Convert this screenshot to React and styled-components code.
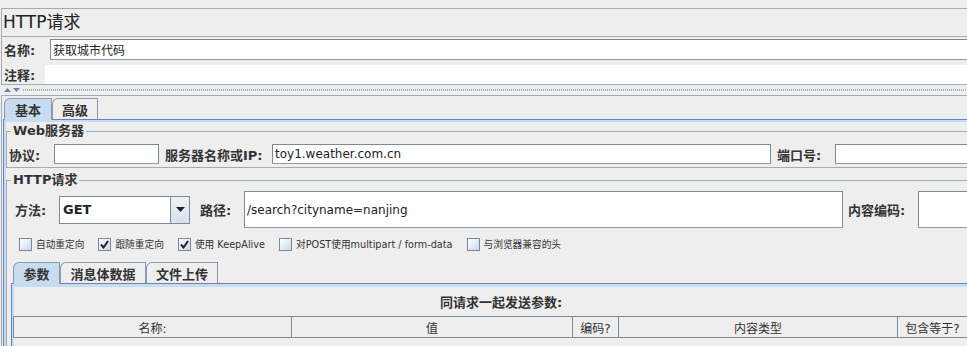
import React from "react";
import styled, { createGlobalStyle } from "styled-components";

const GlobalStyle = createGlobalStyle`
  html, body { margin: 0; padding: 0; overflow: hidden; background: #eeeeee; }
  body { font-family: "DejaVu Sans", "Noto Sans CJK SC", sans-serif; color: #333333; }
  * { box-sizing: border-box; }
`;

const Page = styled.div`
  width: 990px;
  height: 346px;
  padding-top: 8px;
  overflow: hidden;
`;

const Header = styled.div`
  margin-left: 1px;
  border: 1px solid #a3abb4;
  border-right: none;
`;

const Title = styled.div`
  height: 28px;
  line-height: 27px;
  padding-left: 1px;
  font-size: 17px;
  color: #222222;
  border-bottom: 1px solid #a3abb4;
`;

const NameArea = styled.div`
  display: flex;
  flex-direction: column;
  gap: 5px;
  padding-top: 2px;
`;

const Row = styled.div`
  display: flex;
  align-items: center;
  padding: ${(p) => p.$pad || "0"};
`;

const Label = styled.span`
  flex: none;
  width: ${(p) => p.$w}px;
  margin-left: ${(p) => p.$ml || 0}px;
  font-size: ${(p) => p.$size || 13}px;
  font-weight: bold;
  color: #333333;
  white-space: nowrap;
`;

const Field = styled.div`
  flex: ${(p) => (p.$w ? "none" : "1")};
  width: ${(p) => (p.$w ? `${p.$w}px` : "auto")};
  height: ${(p) => p.$h || 20}px;
  display: flex;
  align-items: center;
  padding-left: 2px;
  background: #ffffff;
  border: 1px solid #7a8a99;
  border-bottom-color: #8e9cab;
  font-size: 12px;
  color: #222222;
  white-space: nowrap;
`;

const NoteArea = styled.div`
  flex: 1;
  height: 19px;
  background: #ffffff;
`;

const Splitter = styled.div`
  height: 10px;
  display: flex;
  align-items: center;
  padding-left: 4px;
  gap: 2px;
`;

const Dots = styled.div`
  flex: 1;
  height: 2px;
  margin-left: 1px;
  border-top: 1px dotted #98a4b0;
  border-bottom: 1px dotted #b4bec8;
`;

const Lower = styled.div`
  margin-left: 1px;
  border-top: 1px solid #a3abb4;
  border-left: 1px solid #a3abb4;
  height: 251px;
`;

const TabStrip = styled.div`
  display: flex;
  align-items: flex-end;
  padding: ${(p) => (p.$top ? "2px 0 0 2px" : "0 0 0 2px")};
`;

const Tab = styled.div`
  position: relative;
  z-index: 1;
  width: ${(p) => p.$w}px;
  height: ${(p) => (p.$active ? 22 : 21)}px;
  margin-bottom: ${(p) => (p.$active ? -1 : 0)}px;
  display: flex;
  align-items: center;
  justify-content: center;
  font-size: 13px;
  font-weight: bold;
  color: #333333;
  background: ${(p) => (p.$active ? "#c8dcf0" : "#eeeeee")};
  border: 1px solid #8a9bb0;
  border-bottom: none;
  border-top-left-radius: 6px;
`;

const TabPanel = styled.div`
  margin-left: ${(p) => p.$ml || 0}px;
  border-top: 1px solid #6382bf;
  border-left: 1px solid #6382bf;
  box-shadow: inset 2px ${(p) => p.$band || 2}px 0 #c8dcf0;
  padding-top: ${(p) => p.$band || 2}px;
  min-height: ${(p) => p.$min || 0}px;
`;

const Group = styled.fieldset`
  margin: ${(p) => p.$mt}px 0 0 2px;
  padding: 0;
  min-width: 0;
  border: 1px solid #a3abb4;
  border-right: none;
  border-bottom: ${(p) => (p.$open ? "none" : "1px solid #a3abb4")};
`;

const Legend = styled.legend`
  margin-left: 4px;
  padding: 0 2px;
  font-size: 13px;
  line-height: 14px;
  font-weight: bold;
  color: #333333;
`;

const Combo = styled.div`
  flex: none;
  width: 131px;
  height: 28px;
  display: flex;
  border: 1px solid #7a8a99;
  background: #ffffff;
`;

const ComboText = styled.div`
  flex: 1;
  display: flex;
  align-items: center;
  padding-left: 2px;
  font-size: 13px;
  font-weight: bold;
  color: #222222;
  border: 1px solid #ffffff;
`;

const ComboButton = styled.div`
  flex: none;
  width: 19px;
  display: flex;
  align-items: center;
  justify-content: center;
  border-left: 1px solid #7a8a99;
  background: linear-gradient(#eef2f7, #d6e1ec);
`;

const Checks = styled.div`
  display: flex;
  align-items: center;
  gap: 14px;
  padding-left: 12px;
  margin-top: 9px;
`;

const CheckItem = styled.label`
  display: flex;
  align-items: center;
  gap: 4px;
  font-size: 9.7px;
  color: #333333;
  white-space: nowrap;
`;

const Box = styled.span`
  flex: none;
  width: 13px;
  height: 13px;
  display: flex;
  align-items: center;
  justify-content: center;
  border: 1px solid #7a8a99;
  background: linear-gradient(135deg, #ffffff, #c8d8ea);
`;

const SubPane = styled.div`
  margin: 11px 0 0 4px;
`;

const Caption = styled.div`
  height: 29px;
  padding-top: 9px;
  text-align: center;
  font-size: 13px;
  line-height: 14px;
  font-weight: bold;
  color: #333333;
`;

const TableHead = styled.div`
  display: flex;
  height: 22px;
  margin-left: 1px;
  border-top: 1px solid #7a8a99;
  border-bottom: 1px solid #7a8a99;
  border-left: 1px solid #7a8a99;
`;

const HeadCell = styled.div`
  flex: none;
  width: ${(p) => p.$w}px;
  display: flex;
  align-items: center;
  justify-content: center;
  font-size: 12px;
  color: #333333;
  border-right: 1px solid #7a8a99;
  white-space: nowrap;
`;

const Check = ({ on, children }) => (
  <CheckItem>
    <Box>
      {on && (
        <svg width="9" height="9" viewBox="0 0 9 9">
          <path d="M1 4.5 L3.5 7.5 L8 1" fill="none" stroke="#222" strokeWidth="2" />
        </svg>
      )}
    </Box>
    {children}
  </CheckItem>
);

const Arrow = ({ up }) => (
  <svg width="7" height="4" viewBox="0 0 7 4">
    <path d={up ? "M0 4 L3.5 0 L7 4 Z" : "M0 0 L7 0 L3.5 4 Z"} fill="#6382bf" />
  </svg>
);

export default () => {
  return (
    <Page>
      <GlobalStyle />
      <Header>
        <Title>HTTP请求</Title>
        <NameArea>
          <Row $pad="0 0 0 2px">
            <Label $w={46}>名称:</Label>
            <Field $h={21}>获取城市代码</Field>
          </Row>
          <Row $pad="0 0 0 2px">
            <Label $w={41}>注释:</Label>
            <NoteArea />
          </Row>
        </NameArea>
      </Header>
      <Splitter>
        <Arrow up />
        <Arrow />
        <Dots />
      </Splitter>
      <Lower>
        <TabStrip $top>
          <Tab $active $w={48}>基本</Tab>
          <Tab $w={46}>高级</Tab>
        </TabStrip>
        <TabPanel $ml={1} $min={220}>
          <Group $mt={2}>
            <Legend>Web服务器</Legend>
            <Row $pad="6px 0 3px 2px">
              <Label $w={45}>协议:</Label>
              <Field $w={105} />
              <Label $w={107} $ml={6}>服务器名称或IP:</Label>
              <Field $w={499}>toy1.weather.com.cn</Field>
              <Label $w={58} $ml={6}>端口号:</Label>
              <Field />
            </Row>
          </Group>
          <Group $mt={5} $open>
            <Legend>HTTP请求</Legend>
            <Row $pad="4px 0 0 8px">
              <Label $w={44}>方法:</Label>
              <Combo>
                <ComboText>GET</ComboText>
                <ComboButton>
                  <svg width="9" height="5" viewBox="0 0 9 5">
                    <path d="M0 0 L9 0 L4.5 5 Z" fill="#222" />
                  </svg>
                </ComboButton>
              </Combo>
              <Label $w={44} $ml={10}>路径:</Label>
              <Field $w={599} $h={37}>/search?cityname=nanjing</Field>
              <Label $w={70} $ml={5}>内容编码:</Label>
              <Field $h={37} />
            </Row>
            <Checks>
              <Check>自动重定向</Check>
              <Check on>跟随重定向</Check>
              <Check on>使用 KeepAlive</Check>
              <Check>对POST使用multipart / form-data</Check>
              <Check>与浏览器兼容的头</Check>
            </Checks>
            <SubPane>
              <TabStrip>
                <Tab $active $w={47}>参数</Tab>
                <Tab $w={86}>消息体数据</Tab>
                <Tab $w={72}>文件上传</Tab>
              </TabStrip>
              <TabPanel $band={3} $min={80}>
                <Caption>同请求一起发送参数:</Caption>
                <TableHead>
                  <HeadCell $w={278}>名称:</HeadCell>
                  <HeadCell $w={281}>值</HeadCell>
                  <HeadCell $w={46}>编码?</HeadCell>
                  <HeadCell $w={279}>内容类型</HeadCell>
                  <HeadCell $w={70}>包含等于?</HeadCell>
                </TableHead>
              </TabPanel>
            </SubPane>
          </Group>
        </TabPanel>
      </Lower>
    </Page>
  );
};
